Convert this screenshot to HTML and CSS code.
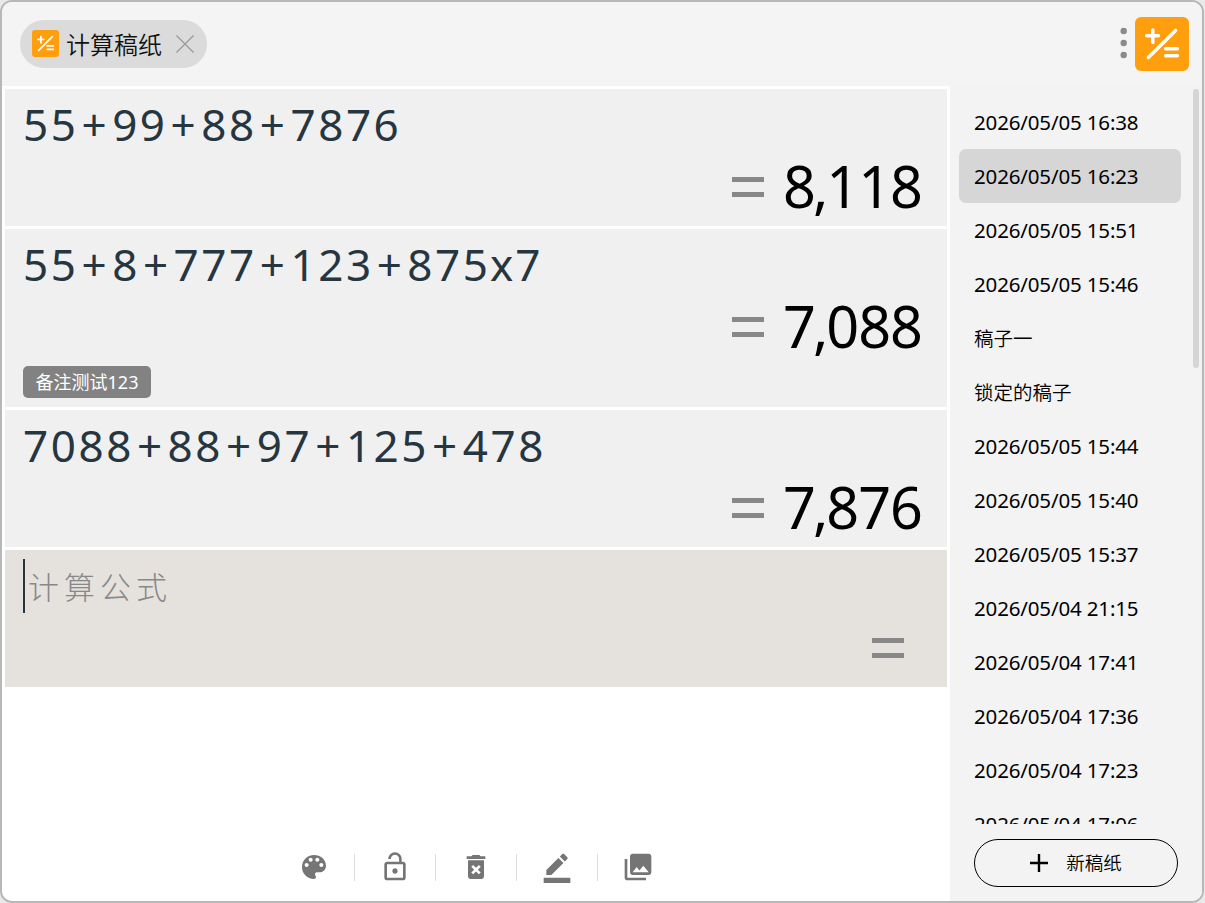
FILE: index.html
```html
<!DOCTYPE html>
<html lang="zh-CN">
<head>
<meta charset="utf-8">
<title>计算稿纸</title>
<link rel="stylesheet" href="styles.css">
</head>
<body>
<svg class="defs" width="0" height="0">
  <symbol id="logo" viewBox="0 0 54 54">
    <rect width="54" height="54" rx="6" fill="#ff9f0e"/>
    <path d="M11.8 18.8H23.4M17.8 13V25.4M13.4 40.6L40.6 13.4M30.6 31.8H42.4M30.6 38.8H42.4" fill="none" stroke="#fff" stroke-width="3.5" stroke-linecap="round"/>
  </symbol>
</svg>
<div class="window">
  <header class="header">
    <div class="tab">
      <svg class="tab-logo"><use href="#logo"/></svg>
      <span class="tab-title">计算稿纸</span>
      <svg class="close" viewBox="0 0 18 18"><path d="M.5.5l17 17M17.5.5l-17 17" stroke="#999" stroke-width="1.3"/></svg>
    </div>
    <div class="brand">
      <svg class="dots" viewBox="0 0 8 32"><g fill="#8a8a8a"><circle cx="3.700" cy="4" r="3.2"/><circle cx="3.700" cy="16" r="3.2"/><circle cx="3.700" cy="28" r="3.2"/></g></svg>
      <svg class="brand-logo"><use href="#logo"/></svg>
    </div>
  </header>
  <div class="body">
    <main class="sheet">
      <section class="cell">
        <div class="expr">55<i>+</i>99<i>+</i>88<i>+</i>7876</div>
        <div class="result"><span class="eq"></span><span class="value">8<i>,</i>118</span></div>
      </section>
      <section class="cell noted">
        <div class="expr">55<i>+</i>8<i>+</i>777<i>+</i>123<i>+</i>875<b>x</b>7</div>
        <div class="result"><span class="eq"></span><span class="value">7<i>,</i>088</span></div>
        <div class="note">备注测试123</div>
      </section>
      <section class="cell">
        <div class="expr">7088<i>+</i>88<i>+</i>97<i>+</i>125<i>+</i>478</div>
        <div class="result"><span class="eq"></span><span class="value">7<i>,</i>876</span></div>
      </section>
      <section class="cell active">
        <div class="input"><span class="placeholder">计算公式</span></div>
        <div class="result"><span class="eq"></span></div>
      </section>
      <div class="toolbar">
        <svg viewBox="0 0 24 24"><path d="M12 3c-4.970 0-9 4.030-9 9s4.030 9 9 9c.83 0 1.500-.67 1.500-1.500 0-.39-.15-.74-.39-1.010-.23-.26-.38-.61-.38-.99 0-.83.67-1.500 1.500-1.500H16c2.760 0 5-2.240 5-5 0-4.420-4.030-8-9-8zm-5.500 9c-.83 0-1.500-.67-1.500-1.500S5.670 9 6.500 9 8 9.670 8 10.500 7.330 12 6.500 12zm3-4C8.670 8 8 7.330 8 6.500S8.670 5 9.500 5s1.500.67 1.500 1.500S10.330 8 9.500 8zm5 0c-.83 0-1.500-.67-1.500-1.500S13.670 5 14.500 5s1.500.67 1.500 1.500S15.330 8 14.500 8zm3 4c-.83 0-1.500-.67-1.500-1.500S16.670 9 17.500 9s1.500.67 1.500 1.500-.67 1.500-1.500 1.500z"/></svg>
        <span class="sep"></span>
        <svg viewBox="0 0 24 24"><path d="M12 17c1.100 0 2-.9 2-2s-.9-2-2-2-2 .9-2 2 .9 2 2 2zm6-9h-1V6c0-2.760-2.240-5-5-5S7 3.240 7 6h1.900c0-1.710 1.390-3.100 3.100-3.100 1.710 0 3.100 1.390 3.100 3.100v2H6c-1.100 0-2 .9-2 2v10c0 1.100.9 2 2 2h12c1.100 0 2-.9 2-2V10c0-1.100-.9-2-2-2zm0 12H6V10h12v10z"/></svg>
        <span class="sep"></span>
        <svg viewBox="0 0 24 24"><path d="M6 19c0 1.100.9 2 2 2h8c1.100 0 2-.9 2-2V7H6v12zm2.460-7.120l1.410-1.410L12 12.590l2.120-2.120 1.410 1.410L13.410 14l2.120 2.120-1.410 1.410L12 15.410l-2.120 2.120-1.410-1.410L10.590 14l-2.130-2.120zM15.500 4l-1-1h-5l-1 1H5v2h14V4z"/></svg>
        <span class="sep"></span>
        <svg viewBox="0 0 24 24"><path d="M22 24H2v-4h20v4zM13.060 5.190l3.750 3.750L7.750 18H4v-3.750l9.060-9.060zm4.820 2.680l-3.750-3.750 1.830-1.830c.39-.39 1.020-.39 1.410 0l2.340 2.340c.39.39.39 1.020 0 1.410l-1.830 1.830z"/></svg>
        <span class="sep"></span>
        <svg viewBox="0 0 24 24"><path d="M22 16V4c0-1.100-.9-2-2-2H8c-1.100 0-2 .9-2 2v12c0 1.100.9 2 2 2h12c1.100 0 2-.9 2-2zm-11-4l2.030 2.710L16 11l4 5H8l3-4zM2 6v14c0 1.100.9 2 2 2h14v-2H4V6H2z"/></svg>
      </div>
    </main>
    <aside class="side">
      <ul class="list">
        <li>2026/05/05 16:38</li>
        <li class="on">2026/05/05 16:23</li>
        <li>2026/05/05 15:51</li>
        <li>2026/05/05 15:46</li>
        <li class="cn">稿子一</li>
        <li class="cn">锁定的稿子</li>
        <li>2026/05/05 15:44</li>
        <li>2026/05/05 15:40</li>
        <li>2026/05/05 15:37</li>
        <li>2026/05/04 21:15</li>
        <li>2026/05/04 17:41</li>
        <li>2026/05/04 17:36</li>
        <li>2026/05/04 17:23</li>
        <li>2026/05/04 17:06</li>
      </ul>
      <span class="thumb"></span>
      <button class="new"><svg viewBox="0 0 18 18"><path d="M9 0v18M0 9h18" stroke="#000" stroke-width="2.400"/></svg><span>新稿纸</span></button>
    </aside>
  </div>
</div>
</body>
</html>
```
FILE: styles.css
```css
* { box-sizing: border-box; }
body {
  margin: 0;
  background: #e9e9e9;
  font-family: "Noto Sans", "Noto Sans CJK SC", sans-serif;
  color: #000;
  overflow: hidden;
}
.defs { display: block; position: absolute; }
.window {
  width: 1204px;
  height: 903px;
  border: 2px solid #b8b8b8;
  border-radius: 12px;
  background: #fff;
  overflow: hidden;
  display: flex;
  flex-direction: column;
}
.header {
  height: 84px;
  flex: none;
  background: #f4f4f4;
  display: flex;
  justify-content: space-between;
  align-items: center;
  padding: 0 13px 0 18px;
}
.tab {
  height: 48px;
  width: 187px;
  border-radius: 24px;
  background: #dbdbdb;
  display: flex;
  align-items: center;
  padding-left: 12px;
}
.tab-logo { width: 27px; height: 27px; margin-bottom: 1px; }
.tab-title {
  font-family: "Noto Sans CJK SC", sans-serif;
  font-weight: 350;
  font-size: 24px;
  line-height: 48px;
  margin-left: 7px;
  color: #111;
}
.close { width: 18px; height: 18px; margin-left: 14px; }
.brand { display: flex; align-items: center; gap: 7px; }
.dots { width: 8px; height: 32px; margin-bottom: 2px; }
.brand-logo { width: 54px; height: 54px; }
.body { flex: 1; display: flex; min-height: 0; }
.sheet {
  width: 948px;
  padding: 3px 3px 0;
  display: flex;
  flex-direction: column;
  gap: 3px;
}
.cell { height: 137px; flex: none; background: #f0f0f0; padding: 9px 25px 0 18px; }
.noted { height: 178px; }
.active { background: #e5e2dd; }
.expr {
  height: 54px;
  line-height: 52px;
  font-size: 44px;
  letter-spacing: 2.550px;
  color: #263640;
  white-space: nowrap;
}
.expr i { font-style: normal; margin: 0 3px; }
.expr b { font-weight: 400; margin: 0 -.5px; }
.result {
  height: 70px;
  display: flex;
  justify-content: flex-end;
  align-items: center;
}
.eq {
  width: 32px;
  height: 20px;
  border: solid #888;
  border-width: 5px 0;
  margin-right: 19px;
}
.active .eq { margin-right: 18px; }
.value { font-size: 57.5px; line-height: 68px; height: 70px; letter-spacing: -1px; }
.value i { font-style: normal; margin: 0 -1px 0 -2px; }
.note {
  width: 128px;
  height: 32px;
  margin-top: 4px;
  border-radius: 5px;
  background: #828282;
  color: #fff;
  font-size: 18px;
  line-height: 32px;
  text-align: center;
}
.input {
  height: 54px;
  border-left: 2px solid #263640;
  padding-left: 3px;
}
.placeholder {
  font-family: "Noto Sans CJK SC", sans-serif;
  font-weight: 300;
  font-size: 31px;
  line-height: 54px;
  letter-spacing: 5px;
  color: #888;
}
.toolbar {
  margin: auto auto 18px 293px;
  display: flex;
  align-items: center;
  gap: 24px;
}
.toolbar svg { width: 32px; height: 32px; fill: #757575; }
.sep { width: 1px; height: 27px; background: #ddd; }
.side {
  flex: 1;
  position: relative;
  background: #f3f3f3;
  display: flex;
  flex-direction: column;
  padding: 9px 21px 14px 9px;
}
.list {
  list-style: none;
  margin: 0;
  padding: 0;
  height: 729px;
  overflow: hidden;
}
.list li {
  height: 54px;
  padding-left: 15px;
  border-radius: 7px;
  font-size: 20.5px;
  letter-spacing: -.15px;
  line-height: 54px;
  white-space: nowrap;
}
.list .cn { font-family: "Noto Sans CJK SC", sans-serif; font-weight: 350; font-size: 19.5px; letter-spacing: 0; line-height: 53px; }
.list .on { background: #d6d6d6; }
.thumb {
  position: absolute;
  top: 3px;
  right: 3px;
  width: 6px;
  height: 279px;
  border-radius: 3px;
  background: #d5d5d5;
}
.new {
  width: 204px;
  height: 48px;
  margin: auto 0 0 15px;
  border: 1px solid #000;
  border-radius: 24px;
  background: transparent;
  display: flex;
  align-items: center;
  justify-content: center;
  gap: 18px;
  padding: 0;
  font: 350 18.5px "Noto Sans CJK SC", sans-serif;
  color: #000;
}
.new svg { width: 18px; height: 18px; }
.new span { margin-bottom: 2px; }
```
